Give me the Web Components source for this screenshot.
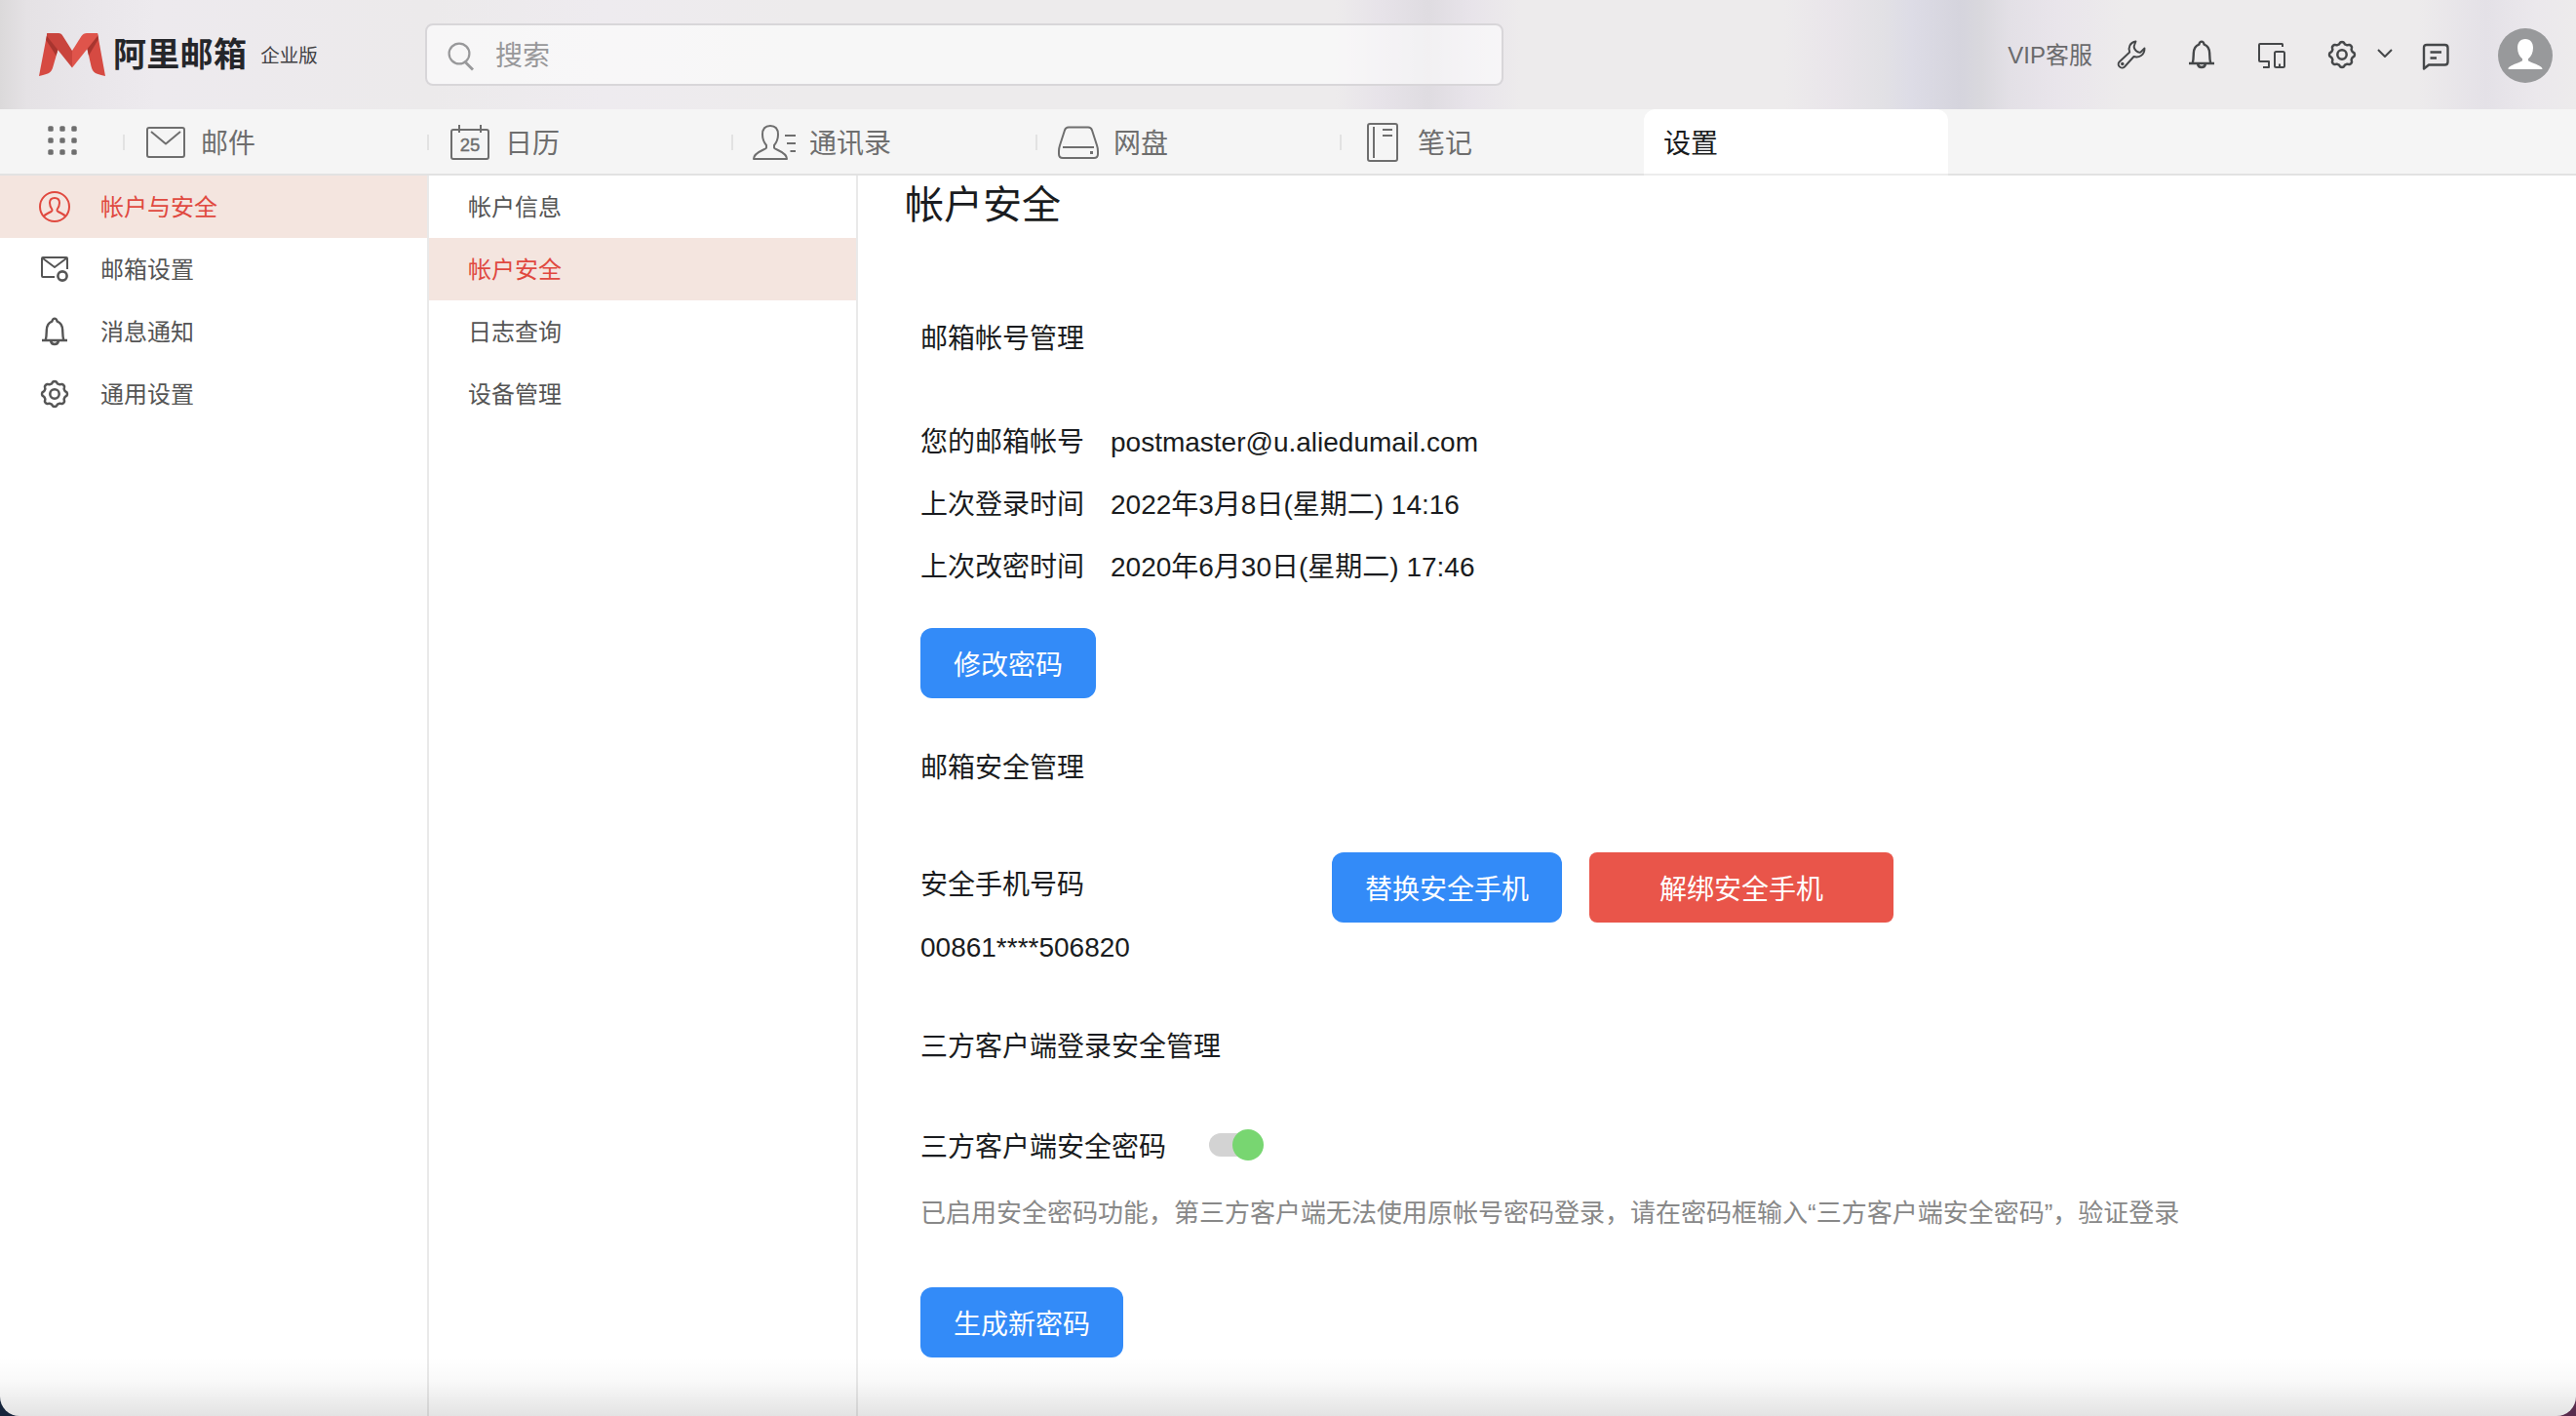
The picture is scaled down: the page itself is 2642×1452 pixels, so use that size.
<!DOCTYPE html>
<html lang="zh-CN">
<head>
<meta charset="utf-8">
<title>阿里邮箱</title>
<style>
html, body {
  margin: 0;
  height: 100%;
}
body {
  background: linear-gradient(90deg, #16253c 50%, #592c4e 50%);
  font-family: "Liberation Sans", "Noto Sans CJK SC", sans-serif;
  color: #1a1c20;
  overflow: hidden;
}
</style>
</head>
<body>
<mail-app></mail-app>

<script>
// outline of a cog with eight soft teeth
function gearPath(cx, cy, radius, depth) {
  let d = "";
  for (let i = 0; i < 96; i++) {
    const t = (i / 96) * Math.PI * 2;
    const r = radius + depth * Math.tanh(1.6 * Math.cos(8 * t));
    d += (i ? "L" : "M") + (cx + r * Math.cos(t)).toFixed(2) + " " + (cy + r * Math.sin(t)).toFixed(2);
  }
  return d + "Z";
}

const bell = `<path d="M1 24H27M4.8 23.5C5.700 20 5.700 17 5.800 13.500C6 8.500 8.500 5.600 11.300 4.600C11.800 2.600 12.700 1.600 14 1.600S16.200 2.600 16.700 4.600C19.500 5.600 22 8.500 22.200 13.500C22.300 17 22.300 20 23.200 23.500M10 24.500C10.400 27 12 28 14 28S17.600 27 18 24.500"/>`;

// name: [width, height, stroke width, markup]
const icons = {
  logo: [68, 44, 0, `
    <g stroke="none">
      <path fill="#d64a42" d="M8.4 0L0 44C9 42 13 41 14.5 34L20 15Z"/>
      <path fill="#a8352f" d="M8.4 0L20 15L17.5 23L7.2 7Z"/>
      <path fill="#d64a42" d="M60 0L68 44C59 42 55 41 53.5 34L49 14Z"/>
      <path fill="#a8352f" d="M60 0L49 14L51 23L61 6Z"/>
      <path fill="#c9443d" d="M8.4 0H20Q23 0 24.5 3L34 18V35.5L8 3Z"/>
      <path fill="#df544b" d="M60 0H49Q45.5 0 43.5 3L34 18V35.5L60 3Z"/>
    </g>`],
  search: [28, 30, 2.2, `<circle cx="12" cy="12" r="10.4"/><path d="M18.5 21L26 28.5" stroke-width="2.8"/>`],
  apps: [30, 30, 0, [3, 15, 27].map(y => [3, 15, 27].map(x =>
    `<rect x="${x - 2.7}" y="${y - 2.7}" width="5.4" height="5.4" rx="1.5" fill="currentColor" stroke="none"/>`).join("")).join("")],
  mail: [40, 32, 2, `<rect x="1" y="1" width="38" height="30" rx="2"/><path d="M5 5L20 17.5L35 5"/>`],
  calendar: [40, 36, 2, `<rect x="1" y="5" width="38" height="30" rx="2"/><path d="M9 0V8M31 0V8"/>
    <text x="20" y="27" text-anchor="middle" font-size="18.5" fill="currentColor" stroke="currentColor" stroke-width=".4">25</text>`],
  contacts: [44, 36, 2, `<path d="M18 1C12.5 1 10 4.5 10 10C10 14.5 11.5 18 14 21V23.5C14 25.5 1 27.5 1 35H35C35 27.5 22 25.5 22 23.5V21C24.5 18 26 14.5 26 10C26 4.5 23.5 1 18 1Z"/><path d="M33 11H44M35 19H44M38.5 27H44"/>`],
  disk: [42, 34, 2, `<path d="M11 1.5H31Q34 1.5 35 4.5L40 20Q41 23 41 26V29Q41 33 37 33H5Q1 33 1 29V26Q1 23 2 20L7 4.5Q8 1.5 11 1.5ZM5 22H37"/><rect x="33" y="26" width="3" height="3" fill="currentColor" stroke="none"/>`],
  note: [32, 40, 2, `<rect x="1" y="1" width="30" height="38" rx="2"/><path d="M7 4V36M16 7H26M16 13H26"/>`],
  wrench: [30, 30, 1.9, `<path d="M19.5 1.500C13.500 2.500 11.500 7.500 13.200 12.500L2.600 22.500C-.5 25.500 4.500 31 8 27.500L17.500 17C22.500 18.500 28.800 15.500 28.500 8.500L24.500 12.500C21.500 13.500 17 9.500 17.800 6Z"/><circle cx="5.800" cy="24.500" r="1.700" fill="currentColor" stroke="none"/>`],
  bell: [28, 30, 2.4, bell],
  devices: [28, 28, 2, `<path d="M25 5V2.500Q25 2 24.500 2H2Q1 2 1 3V19Q1 20 2 20H11V26H5"/><rect x="17" y="10" width="10" height="16" rx="1.500"/><path d="M21 24H23" stroke-width="3"/>`],
  gear: [28, 28, 2.5, `<path d="${gearPath(14, 14, 11.900, 1.100)}"/><circle cx="14" cy="14" r="4.700"/>`],
  chevron: [16, 10, 2, `<path d="M1 1L8 8L15 1"/>`],
  message: [28, 28, 2.4, `<path d="M2 26.500V5Q2 2 5 2H23.500Q26.500 2 26.500 5V19.500Q26.500 22.500 23.500 22.500H7Z"/><path d="M8.500 9.500H20M8.500 15.500H15"/>`],
  avatar: [56, 56, 0, `<circle cx="28" cy="28" r="28" fill="#98999b" stroke="none"/>
    <path fill="#fff" stroke="none" d="M28 11C22.500 11 20 15 20 20C20 25 22 29 25 31.200V33C25 34.500 10.500 38 10.500 41.500Q10.500 42 11.500 42H44.500Q45.500 42 45.500 41.500C45.500 38 31 34.500 31 33V31.200C34 29 36 25 36 20C36 15 33.500 11 28 11Z"/>`],
  account: [32, 32, 2, `<circle cx="16" cy="16" r="15"/><path d="M5 25.500Q7 23.500 12.500 21Q13.800 20.400 13.500 19C11.500 16.500 11 14 11 12C11 9 13 7 16 7S21 9 21 12C21 14 20.500 16.500 18.500 19Q18.200 20.400 19.500 21Q25 23.500 27 25.500"/>`],
  mailset: [28, 26, 2, `<path d="M14 21H2Q1 21 1 20V2Q1 1 2 1H26Q27 1 27 2V13M2 2L14 11L26 2"/><circle cx="22" cy="20" r="4.600" stroke-width="2.600"/>`],
};

class MailIcon extends HTMLElement {
  connectedCallback() {
    const [w, h, stroke, body] = icons[this.getAttribute("name")];
    this.attachShadow({ mode: "open" }).innerHTML = `
      <style>
      :host { display: block; flex: none; width: ${w}px; height: ${h}px; }
      svg { display: block; overflow: visible; }
      </style>
      <svg width="${w}" height="${h}" viewBox="0 0 ${w} ${h}" fill="none" stroke="currentColor" stroke-width="${stroke}" stroke-linejoin="round">${body}</svg>`;
  }
}
customElements.define("mail-icon", MailIcon);

// defines an element whose shadow root is cloned from static markup
function define(name, html) {
  const template = document.createElement("template");
  template.innerHTML = html;
  customElements.define(name, class extends HTMLElement {
    constructor() {
      super();
      this.attachShadow({ mode: "open" }).appendChild(template.content.cloneNode(true));
    }
  });
}

define("search-box", `
<style>
:host {
  display: flex;
  align-items: center;
  box-sizing: border-box;
  width: 1106px;
  height: 64px;
  padding-left: 21px;
  gap: 21px;
  border: 2px solid #d8d6d9;
  border-radius: 8px;
  background: rgba(255, 255, 255, 0.58);
  color: #98989a;
  font-size: 28px;
}
mail-icon { margin-top: 4px; }
span { padding-bottom: 2px; }
</style>
<mail-icon name="search"></mail-icon>
<span><slot></slot></span>`);

define("top-bar", `
<style>
:host {
  display: flex;
  align-items: center;
  flex: none;
  box-sizing: border-box;
  height: 112px;
  padding: 0 24px 0 40px;
  background:
    linear-gradient(90deg, #dbd9da 0, #e5e2e5 28px, #e9e6ea 90px, #edeaee 160px, #eceaeb 440px, #eeebef 620px, #edebec 820px,
      #edebec 1370px, #e7e3e9 1415px, #dfdce1 1465px, #e8e4ea 1510px, #edebec 1560px,
      #edebec 1830px, #e9e5ea 1880px, #e2e1e5 1930px, #dddce6 1960px, #d5d4dd 2010px, #d9d8dd 2032px, #e3e0e6 2062px, #e9e5eb 2110px, #edebec 2180px,
      #edebec 2480px, #e4e1e7 2550px, #ebe8ec 2600px, #edebec);
  color: #454749;
}
.brand { display: flex; align-items: center; width: 396px; }
.name { margin-left: 8px; font-size: 34px; font-weight: bold; line-height: 50px; letter-spacing: 0.3px; color: #25262a; }
.edition { margin-left: 14px; font-size: 19.5px; line-height: 30px; color: #404042; padding-top: 2px; }
.tools { display: flex; align-items: center; margin-left: auto; }
.vip { font-size: 24px; color: #6a6a6c; margin-right: 25px; padding-bottom: 4px; }
.tools mail-icon { margin-right: 44px; }
.tools mail-icon[name="wrench"] { margin-right: 43px; }
.tools mail-icon[name="gear"] { margin-right: 22px; }
.tools mail-icon[name="chevron"] { margin-right: 30px; margin-top: -2px; }
.tools mail-icon[name="message"] { margin-right: 50px; margin-top: 3px; }
.tools mail-icon[name="devices"] { margin-top: 2px; }
.tools mail-icon[name="avatar"] { margin: 2px 0 0; }
</style>
<div class="brand">
  <mail-icon name="logo"></mail-icon>
  <span class="name">阿里邮箱</span>
  <span class="edition">企业版</span>
</div>
<search-box>搜索</search-box>
<div class="tools">
  <span class="vip">VIP客服</span>
  <mail-icon name="wrench"></mail-icon>
  <mail-icon name="bell"></mail-icon>
  <mail-icon name="devices"></mail-icon>
  <mail-icon name="gear"></mail-icon>
  <mail-icon name="chevron"></mail-icon>
  <mail-icon name="message"></mail-icon>
  <mail-icon name="avatar"></mail-icon>
</div>`);

define("nav-tab", `
<style>
:host {
  display: flex;
  align-items: center;
  box-sizing: border-box;
  width: 312px;
  height: 68px;
  padding-bottom: 2px;
  border-bottom: 2px solid #e2e2e2;
  color: #6e6e6e;
  font-size: 28px;
}
:host::before { content: ""; width: 2px; height: 16px; margin-top: 4px; background: #e2e2e2; }
:host([active]) { background: #fff; border-radius: 12px 12px 0 0; border-color: #ececec; color: #1a1c20; }
:host([active])::before { background: none; }
.icon { display: flex; margin: 4px var(--gap, 16px) 0 var(--indent, 22px); }
.label { padding-top: 2px; }
:host([active]) .icon { margin: 0 0 0 18px; }
</style>
<span class="icon"><slot name="icon"></slot></span>
<span class="label"><slot></slot></span>`);

define("nav-bar", `
<style>
:host {
  display: flex;
  flex: none;
  height: 68px;
  background: #f5f5f5;
  color: #6e6e6e;
}
.apps, .rest { box-sizing: border-box; border-bottom: 2px solid #e2e2e2; }
.apps { width: 126px; padding: 17px 0 0 49px; }
.rest { flex: 1; }
</style>
<div class="apps"><mail-icon name="apps"></mail-icon></div>
<nav-tab><mail-icon slot="icon" name="mail"></mail-icon>邮件</nav-tab>
<nav-tab><mail-icon slot="icon" name="calendar"></mail-icon>日历</nav-tab>
<nav-tab style="--indent: 20px; --gap: 14px"><mail-icon slot="icon" name="contacts"></mail-icon>通讯录</nav-tab>
<nav-tab style="--indent: 21px; --gap: 15px"><mail-icon slot="icon" name="disk"></mail-icon>网盘</nav-tab>
<nav-tab style="--indent: 26px; --gap: 20px"><mail-icon slot="icon" name="note"></mail-icon>笔记</nav-tab>
<nav-tab active>设置</nav-tab>
<div class="rest"></div>`);

define("menu-item", `
<style>
:host {
  display: flex;
  align-items: center;
  box-sizing: border-box;
  height: 64px;
  padding-left: 40px;
  font-size: 24px;
  color: #555;
}
:host([active]) { background: #f4e5df; color: #e0493f; }
.icon { display: flex; justify-content: center; width: 32px; margin-right: 31px; }
.label { padding-bottom: 4px; }
:host([plain]) .icon { display: none; }
</style>
<span class="icon"><slot name="icon"></slot></span>
<span class="label"><slot></slot></span>`);

define("menu-column", `
<style>
:host {
  display: block;
  flex: none;
  box-sizing: border-box;
  width: 440px;
  border-right: 2px solid #e9e9e9;
}
</style>
<slot></slot>`);

define("push-button", `
<style>
:host { display: block; }
button {
  display: block;
  height: 72px;
  margin: 0;
  padding: 0 34px;
  border: 0;
  border-radius: 12px;
  background: #338bf8;
  color: #fff;
  font: inherit;
  white-space: nowrap;
}
:host([danger]) button { width: 312px; border-radius: 8px; background: #e9554a; }
</style>
<button><slot></slot></button>`);

define("toggle-switch", `
<style>
:host { display: flex; align-items: center; height: 32px; }
.track { width: 44px; height: 24px; border-radius: 12px; background: #d3d3d3; }
.thumb { width: 32px; height: 32px; margin-left: -20px; border-radius: 50%; background: #78d671; }
</style>
<div class="track"></div>
<div class="thumb"></div>`);

define("info-row", `
<style>
:host { display: flex; height: 64px; line-height: 68px; }
.label { width: 195px; }
</style>
<span class="label"><slot name="label"></slot></span>
<span><slot></slot></span>`);

define("security-page", `
<style>
:host {
  display: block;
  flex: 1;
  padding-left: 64px;
  font-size: 28px;
}
h1 { margin: 0 0 74px -16px; font-size: 40px; font-weight: normal; line-height: 60px; }
h2 { height: 64px; margin: 38px 0; font-size: 28px; font-weight: normal; line-height: 68px; }
h2.first { margin: 0 0 42px; }
.change { margin-top: 32px; }
.phone { display: flex; align-items: flex-start; height: 128px; margin-top: 56px; }
.number { width: 422px; padding-top: 2px; line-height: 64px; }
.unbind { margin-left: 28px; }
.client { display: flex; align-items: center; height: 64px; }
toggle-switch { margin-left: 44px; }
.hint { height: 64px; margin: 5px 0 45px; font-size: 26px; line-height: 66px; color: #888; }
</style>
<h1>帐户安全</h1>
<h2 class="first">邮箱帐号管理</h2>
<info-row><span slot="label">您的邮箱帐号</span>postmaster@u.aliedumail.com</info-row>
<info-row><span slot="label">上次登录时间</span>2022年3月8日(星期二) 14:16</info-row>
<info-row><span slot="label">上次改密时间</span>2020年6月30日(星期二) 17:46</info-row>
<push-button class="change">修改密码</push-button>
<h2>邮箱安全管理</h2>
<div class="phone">
  <div class="number">安全手机号码<br>00861****506820</div>
  <push-button>替换安全手机</push-button>
  <push-button class="unbind" danger>解绑安全手机</push-button>
</div>
<h2>三方客户端登录安全管理</h2>
<div class="client">三方客户端安全密码<toggle-switch></toggle-switch></div>
<div class="hint">已启用安全密码功能，第三方客户端无法使用原帐号密码登录，请在密码框输入“三方客户端安全密码”，验证登录</div>
<push-button>生成新密码</push-button>`);

define("mail-app", `
<style>
:host {
  display: flex;
  flex-direction: column;
  position: relative;
  height: 100vh;
  background: #fff;
  border-radius: 0 0 20px 20px;
  overflow: hidden;
}
/* shade over the bottom edge of the window */
:host::after {
  content: "";
  position: absolute;
  inset: auto 0 0;
  height: 60px;
  background: linear-gradient(transparent, rgba(0, 0, 0, 0.025) 40%, rgba(0, 0, 0, 0.11));
  pointer-events: none;
}
main { display: flex; flex: 1; min-height: 0; }
</style>
<top-bar></top-bar>
<nav-bar></nav-bar>
<main>
  <menu-column>
    <menu-item active><mail-icon slot="icon" name="account"></mail-icon>帐户与安全</menu-item>
    <menu-item><mail-icon slot="icon" name="mailset"></mail-icon>邮箱设置</menu-item>
    <menu-item><mail-icon slot="icon" name="bell"></mail-icon>消息通知</menu-item>
    <menu-item><mail-icon slot="icon" name="gear"></mail-icon>通用设置</menu-item>
  </menu-column>
  <menu-column>
    <menu-item plain>帐户信息</menu-item>
    <menu-item plain active>帐户安全</menu-item>
    <menu-item plain>日志查询</menu-item>
    <menu-item plain>设备管理</menu-item>
  </menu-column>
  <security-page></security-page>
</main>`);
</script>
</body>
</html>
